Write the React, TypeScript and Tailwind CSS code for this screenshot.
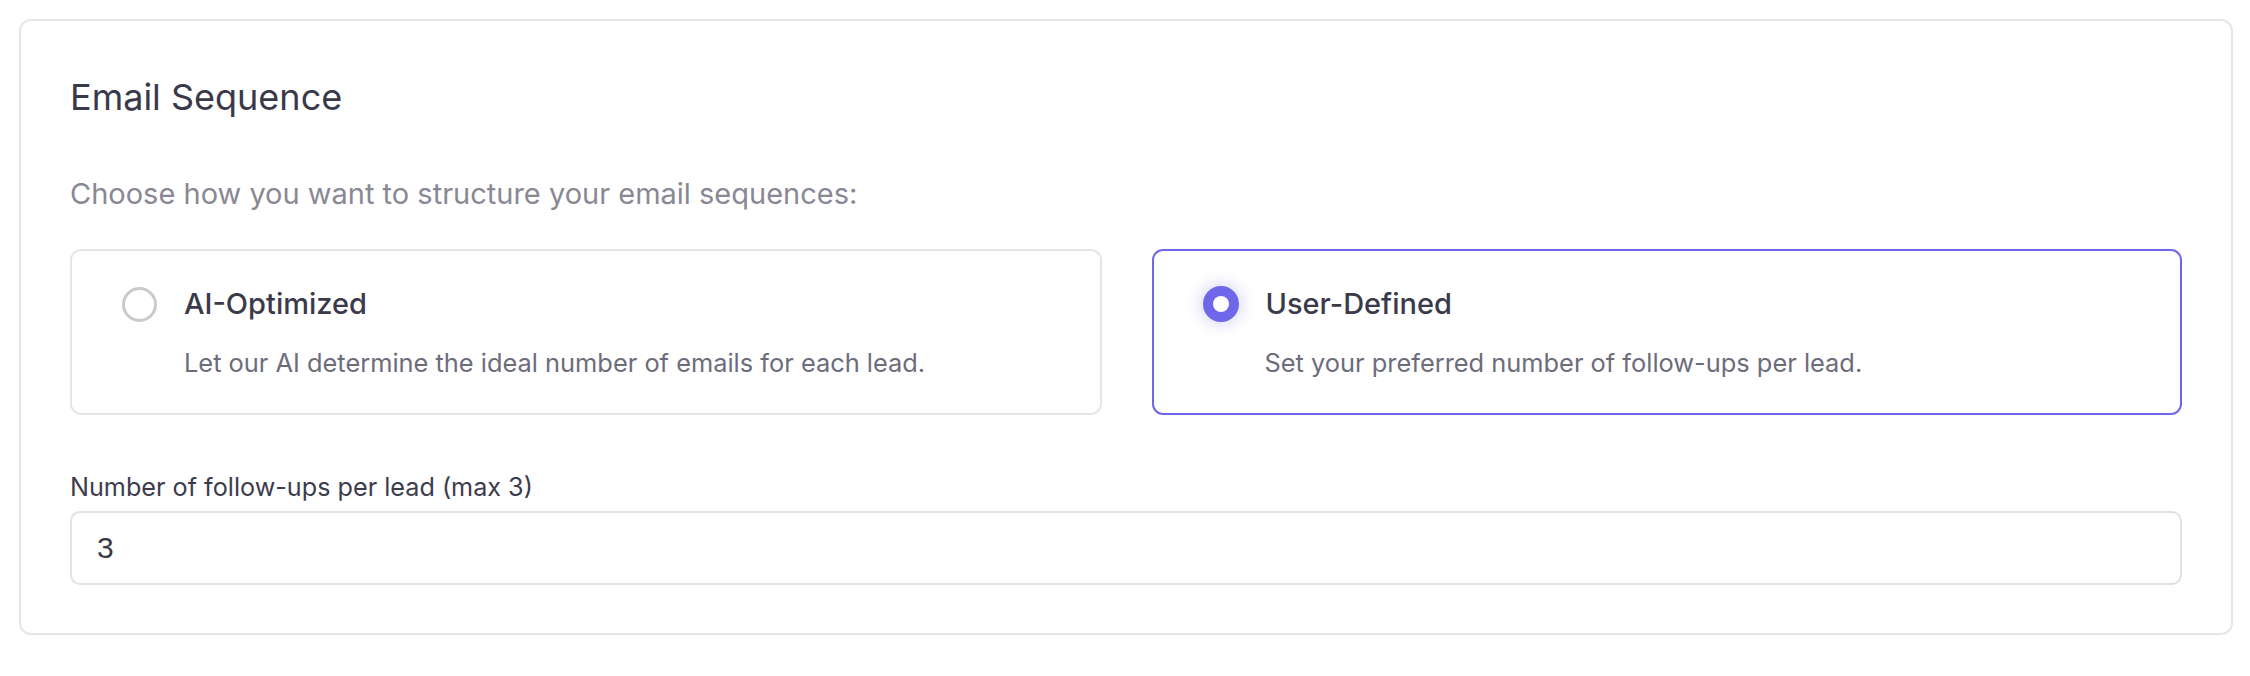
import React from "react";

function RadioOff() {
  return (
    <span className="block h-[35px] w-[35px] shrink-0 rounded-full border-[3.5px] border-[#c9c9ce] bg-white" />
  );
}

function RadioOn() {
  return (
    <span className="flex h-[36px] w-[36px] shrink-0 items-center justify-center rounded-full bg-[#6f67ea] shadow-[0_0_14px_4px_rgba(111,103,234,0.22)]">
      <span className="block h-[16px] w-[16px] rounded-full bg-white" />
    </span>
  );
}

function Option({
  selected,
  title,
  desc,
}: {
  selected: boolean;
  title: string;
  desc: string;
}) {
  return (
    <div
      className={
        selected
          ? "flex-1 rounded-[11px] border-2 border-[#6f67ea] bg-white pl-[49px] pr-6 pt-[35px] pb-[32px]"
          : "flex-1 rounded-[11px] border-2 border-[#e6e6e8] bg-white pl-[50px] pr-6 pt-[35px] pb-[32px]"
      }
    >
      <div className="flex items-center gap-[27px]">
        {selected ? <RadioOn /> : <RadioOff />}
        <span className="text-[29px] leading-[36px] font-medium text-[#3b3a4b]">{title}</span>
      </div>
      <div className="mt-[23px] pl-[62px] text-[25.4px] leading-[36px] text-[#6d6c7b]">{desc}</div>
    </div>
  );
}

export default function App() {
  return (
    <div
      className="min-h-[676px] bg-white pl-[19px] pr-[17px] pt-[19px]"
      style={{ fontFamily: "Inter, Roboto, 'Liberation Sans', sans-serif" }}
    >
      <div className="rounded-[12px] border-2 border-[#e6e6e8] bg-white px-[49px] pt-[54px] pb-[48px]">
        <h2 className="text-[36px] leading-[44px] font-normal text-[#3a3949]">Email Sequence</h2>
        <p className="mt-[57px] text-[29px] leading-[36px] text-[#898893]">
          Choose how you want to structure your email sequences:
        </p>
        <div className="mt-[37px] flex gap-[50px]">
          <Option
            selected={false}
            title="AI-Optimized"
            desc="Let our AI determine the ideal number of emails for each lead."
          />
          <Option
            selected={true}
            title="User-Defined"
            desc="Set your preferred number of follow-ups per lead."
          />
        </div>
        <label className="mt-[56px] block text-[25.2px] leading-[32px] text-[#3d3c4c]">
          Number of follow-ups per lead (max 3)
        </label>
        <div className="mt-[8px] flex h-[74px] items-center rounded-[10px] border-2 border-[#e2e2e4] bg-white pl-[25px]">
          <span
            className="text-[30px] leading-[36px] text-[#3a3944]"
            style={{ fontFamily: "'Liberation Sans', Arial, sans-serif" }}
          >
            3
          </span>
        </div>
      </div>
    </div>
  );
}
